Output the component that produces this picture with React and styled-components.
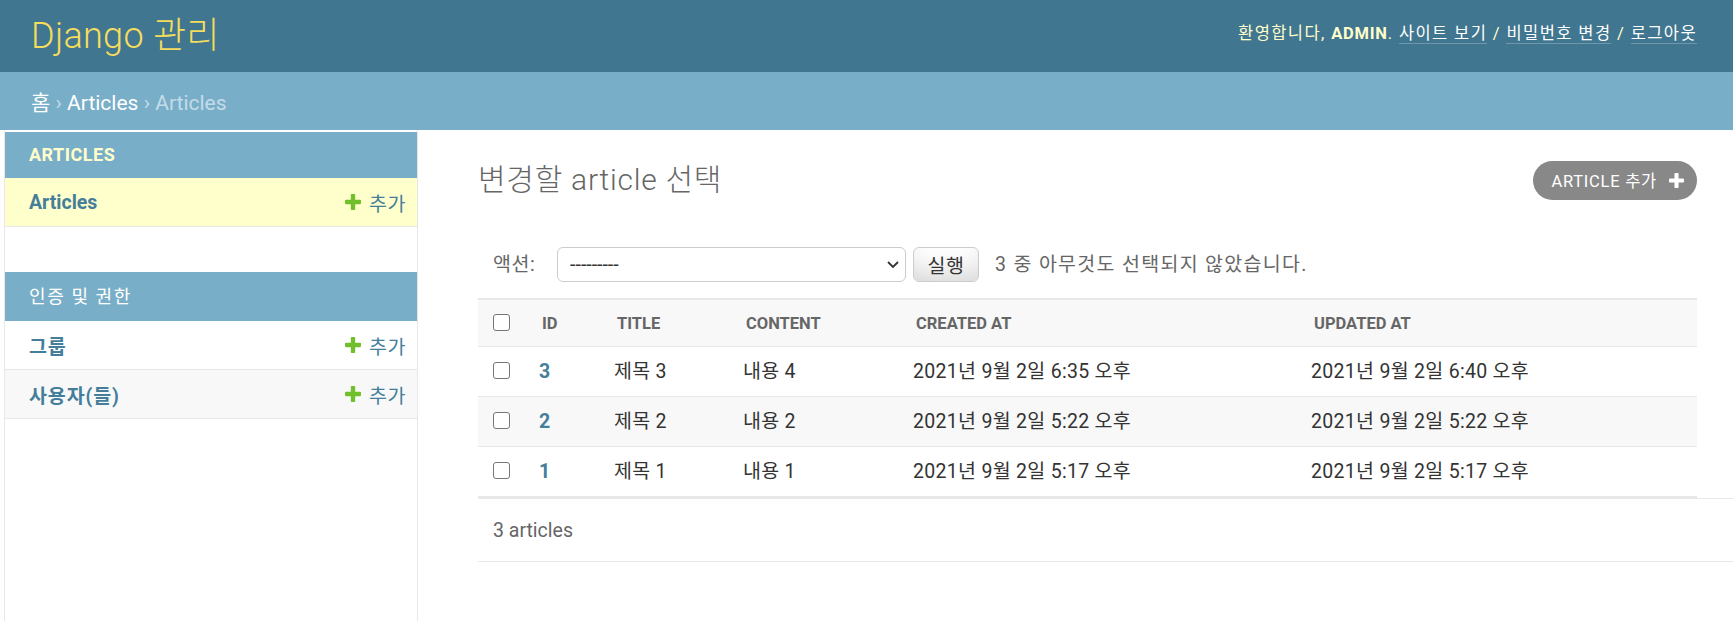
import React from 'react';
import styled, { createGlobalStyle } from 'styled-components';

const FONT = `Roboto, "Noto Sans CJK KR", "Noto Sans", sans-serif`;

const GlobalStyle = createGlobalStyle`
  * { box-sizing: border-box; }
  html, body { margin: 0; padding: 0; background: #fff; }
  body { font-family: ${FONT}; color: #333; font-size: 19.5px; }
  a { text-decoration: none; cursor: pointer; }
`;

const Page = styled.div`
  min-height: 100vh;
  display: flex;
  flex-direction: column;
`;

const Header = styled.header`
  flex: 0 0 72px;
  display: flex;
  align-items: center;
  justify-content: space-between;
  padding: 0 36px 0 31px;
  background: #417690;
`;

const Branding = styled.h1`
  margin: 0;
  font-size: 36px;
  font-weight: 300;
  line-height: 44px;
  letter-spacing: 0.3px;
  color: #f5dd5d;
`;

const UserTools = styled.div`
  font-size: 16.5px;
  line-height: 22px;
  letter-spacing: 1.4px;
  color: #ffc;
  padding-bottom: 5px;
`;

const UserName = styled.strong`
  font-weight: 700;
  letter-spacing: 0.75px;
`;

const ToolLink = styled.a`
  color: #fff;
  border-bottom: 1px solid rgba(255, 255, 255, 0.25);
`;

const Breadcrumbs = styled.nav`
  flex: 0 0 58px;
  display: flex;
  align-items: center;
  padding: 3px 31px 0;
  background: #79aec8;
  color: #c4dce8;
  font-size: 21px;
  line-height: 28px;
  white-space: pre;
`;

const Crumb = styled.a`
  color: #fff;
`;

const Main = styled.div`
  flex: 1;
  display: flex;
`;

const ToggleEdge = styled.div`
  flex: 0 0 5px;
  border-right: 1px solid #e8e8e8;
`;

const Sidebar = styled.nav`
  flex: 0 0 413px;
  padding-top: 2px;
  border-right: 1px solid #e8e8e8;
`;

const AppModule = styled.section`
  margin-bottom: 45px;
`;

const Caption = styled.div`
  padding: 12px 24px;
  background: #79aec8;
  font-size: 18px;
  line-height: ${(p) => (p.$cjk ? '25px' : '22px')};
  color: ${(p) => (p.$current ? '#ffc' : '#fff')};
  font-weight: ${(p) => (p.$current ? 700 : 400)};
  letter-spacing: ${(p) => (p.$cjk ? '1.6px' : '0.5px')};
`;

const ModelRow = styled.div`
  display: flex;
  align-items: center;
  justify-content: space-between;
  height: 49px;
  padding: 0 11px 0 24px;
  border-bottom: 1px solid #e8e8e8;
  background: ${(p) => (p.$current ? '#ffc' : p.$alt ? '#f8f8f8' : '#fff')};
`;

const ModelLink = styled.a`
  font-size: 19.5px;
  font-weight: 700;
  letter-spacing: ${(p) => (p.$cjk ? '0.9px' : '0')};
  color: #447e9b;
`;

const AddLink = styled.a`
  display: flex;
  align-items: center;
  gap: 8px;
  font-size: 19.5px;
  letter-spacing: 0.6px;
  color: #447e9b;
`;

const Content = styled.main`
  flex: 1;
  min-width: 0;
  padding: 30px 0 0 60px;
`;

const ContentHead = styled.div`
  display: flex;
  align-items: center;
  justify-content: space-between;
  height: 40px;
  margin-right: 36px;
`;

const PageTitle = styled.h1`
  margin: 0;
  font-size: 30px;
  font-weight: 300;
  line-height: 40px;
  letter-spacing: 0.75px;
  color: #666;
`;

const AddButton = styled.a`
  display: flex;
  align-items: center;
  gap: 12px;
  height: 39px;
  padding: 0 13px 0 18px;
  border-radius: 20px;
  background: #888;
  color: #fff;
  font-size: 16.5px;
  letter-spacing: 0.75px;
  text-transform: uppercase;
`;

const Actions = styled.div`
  display: flex;
  align-items: center;
  margin: 32px 36px 0 0;
  padding: 15px;
  color: #666;
  font-size: 19.5px;
  line-height: 24px;
`;

const ActionLabel = styled.label`
  margin-right: 22px;
  letter-spacing: 0.5px;
`;

const SelectWrap = styled.div`
  position: relative;
  width: 349px;
  height: 35px;
`;

const Select = styled.select`
  appearance: none;
  width: 100%;
  height: 100%;
  margin: 0;
  padding: 0 12px;
  border: 1px solid #ccc;
  border-radius: 6px;
  background: #fff;
  font-family: ${FONT};
  font-size: 19.5px;
  color: #333;
`;

const Chevron = styled.svg`
  position: absolute;
  right: 7px;
  top: 14px;
  pointer-events: none;
`;

const GoButton = styled.button`
  margin-left: 7px;
  width: 66px;
  height: 35px;
  padding: 0;
  border: 1px solid #ccc;
  border-radius: 6px;
  background: #fff;
  box-shadow: 0 -22px 30px -15px rgba(0, 0, 0, 0.18) inset;
  font-family: ${FONT};
  font-size: 19.5px;
  letter-spacing: 0.6px;
  color: #333;
`;

const Counter = styled.span`
  margin-left: 16px;
  letter-spacing: 1.3px;
`;

const Results = styled.table`
  width: calc(100% - 36px);
  margin-top: 1px;
  border-collapse: separate;
  border-spacing: 0;
  table-layout: fixed;
`;

const Col = styled.col`
  width: ${(p) => p.$w}px;
`;

const HeadCell = styled.th`
  padding: 13px 15px 11px;
  line-height: 22px;
  background: #f8f8f8;
  border-top: 2px solid #e8e8e8;
  border-bottom: 1px solid #e8e8e8;
  text-align: left;
  font-size: 16.5px;
  font-weight: 700;
  color: #666;
  text-transform: uppercase;
  white-space: nowrap;
`;

const BodyRow = styled.tr`
  background: ${(p) => (p.$alt ? '#f8f8f8' : '#fff')};
`;

const Cell = styled.td`
  padding: 13px 12px 12px;
  line-height: 24px;
  border-bottom: ${(p) => (p.$last ? '2px' : '1px')} solid #e8e8e8;
  font-size: 19.5px;
  letter-spacing: 0.3px;
  color: #333;
  white-space: nowrap;
  vertical-align: middle;
`;

const CheckCell = styled(Cell)`
  padding-left: 15px;
  padding-right: 0;
`;

const HeadCheckCell = styled(HeadCell)`
  padding-right: 0;
`;

const Checkbox = styled.input.attrs({ type: 'checkbox' })`
  appearance: none;
  display: block;
  margin: 0 0 4px;
  width: 17px;
  height: 17px;
  border: 1.5px solid #767676;
  border-radius: 3px;
  background: #fff;
`;

const IdLink = styled.a`
  font-weight: 700;
  color: #447e9b;
`;

const Paginator = styled.p`
  display: flex;
  align-items: center;
  height: 64px;
  margin: 0;
  padding: 1px 15px 0;
  border-top: 1px solid #e8e8e8;
  border-bottom: 1px solid #e8e8e8;
  color: #666;
  font-size: 19.5px;
`;

const PLUS =
  'M1600 796v192q0 40-28 68t-68 28h-416v416q0 40-28 68t-68 28h-192q-40 0-68-28t-28-68v-416h-416q-40 0-68-28t-28-68v-192q0-40 28-68t68-28h416v-416q0-40 28-68t68-28h192q40 0 68 28t28 68v416h416q40 0 68 28t28 68z';

const PlusIcon = ({ color, size }) => (
  <svg width={size} height={size} viewBox="192 192 1408 1408" aria-hidden="true">
    <path fill={color} d={PLUS} />
  </svg>
);

const rows = [
  { id: 3, title: '제목 3', content: '내용 4', created: '2021년 9월 2일 6:35 오후', updated: '2021년 9월 2일 6:40 오후' },
  { id: 2, title: '제목 2', content: '내용 2', created: '2021년 9월 2일 5:22 오후', updated: '2021년 9월 2일 5:22 오후' },
  { id: 1, title: '제목 1', content: '내용 1', created: '2021년 9월 2일 5:17 오후', updated: '2021년 9월 2일 5:17 오후' },
];

export default function App() {
  return (
    <Page>
      <GlobalStyle />
      <Header>
        <Branding>Django 관리</Branding>
        <UserTools>
          환영합니다, <UserName>ADMIN</UserName>. <ToolLink>사이트 보기</ToolLink> /{' '}
          <ToolLink>비밀번호 변경</ToolLink> / <ToolLink>로그아웃</ToolLink>
        </UserTools>
      </Header>
      <Breadcrumbs>
        <Crumb>홈</Crumb>
        {' › '}
        <Crumb>Articles</Crumb>
        {' › Articles'}
      </Breadcrumbs>
      <Main>
        <ToggleEdge />
        <Sidebar>
          <AppModule>
            <Caption $current>ARTICLES</Caption>
            <ModelRow $current>
              <ModelLink>Articles</ModelLink>
              <AddLink>
                <PlusIcon color="#70bf2b" size={16} />
                추가
              </AddLink>
            </ModelRow>
          </AppModule>
          <AppModule>
            <Caption $cjk>인증 및 권한</Caption>
            <ModelRow>
              <ModelLink $cjk>그룹</ModelLink>
              <AddLink>
                <PlusIcon color="#70bf2b" size={16} />
                추가
              </AddLink>
            </ModelRow>
            <ModelRow $alt>
              <ModelLink $cjk>사용자(들)</ModelLink>
              <AddLink>
                <PlusIcon color="#70bf2b" size={16} />
                추가
              </AddLink>
            </ModelRow>
          </AppModule>
        </Sidebar>
        <Content>
          <ContentHead>
            <PageTitle>변경할 article 선택</PageTitle>
            <AddButton>
              Article 추가
              <PlusIcon color="#fff" size={15} />
            </AddButton>
          </ContentHead>
          <Actions>
            <ActionLabel>액션:</ActionLabel>
            <SelectWrap>
              <Select defaultValue="">
                <option value="">---------</option>
                <option value="delete">선택된 articles 을/를 삭제합니다.</option>
              </Select>
              <Chevron width="12" height="8" viewBox="0 0 12 8">
                <polyline points="1,1 6,6 11,1" fill="none" stroke="#333" strokeWidth="1.8" />
              </Chevron>
            </SelectWrap>
            <GoButton>실행</GoButton>
            <Counter>3 중 아무것도 선택되지 않았습니다.</Counter>
          </Actions>
          <Results>
            <colgroup>
              <Col $w={49} />
              <Col $w={75} />
              <Col $w={129} />
              <Col $w={170} />
              <Col $w={398} />
              <Col $w={398} />
            </colgroup>
            <thead>
              <tr>
                <HeadCheckCell>
                  <Checkbox />
                </HeadCheckCell>
                <HeadCell>ID</HeadCell>
                <HeadCell>Title</HeadCell>
                <HeadCell>Content</HeadCell>
                <HeadCell>Created at</HeadCell>
                <HeadCell>Updated at</HeadCell>
              </tr>
            </thead>
            <tbody>
              {rows.map((r, i) => {
                const last = i === rows.length - 1;
                return (
                  <BodyRow key={r.id} $alt={i % 2 === 1}>
                    <CheckCell $last={last}>
                      <Checkbox />
                    </CheckCell>
                    <Cell $last={last}>
                      <IdLink>{r.id}</IdLink>
                    </Cell>
                    <Cell $last={last}>{r.title}</Cell>
                    <Cell $last={last}>{r.content}</Cell>
                    <Cell $last={last}>{r.created}</Cell>
                    <Cell $last={last}>{r.updated}</Cell>
                  </BodyRow>
                );
              })}
            </tbody>
          </Results>
          <Paginator>3 articles</Paginator>
        </Content>
      </Main>
    </Page>
  );
}
